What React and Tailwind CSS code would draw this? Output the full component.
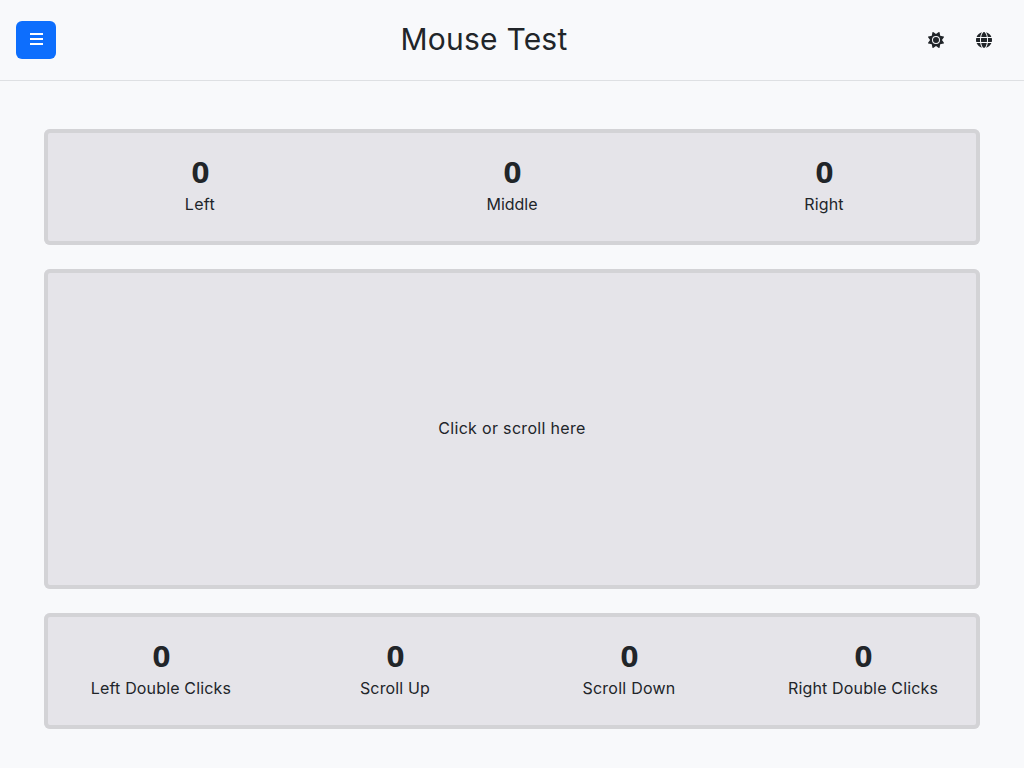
import { useState } from "react";
import { FaGlobe, FaSun } from "react-icons/fa6";

const buttonStats = [
  { id: "left", label: "Left", className: "tracking-[0.02em]" },
  { id: "middle", label: "Middle", className: "tracking-[0]" },
  { id: "right", label: "Right", className: "tracking-[0.01em]" },
];

const extraStats = [
  { id: "leftDouble", label: "Left Double Clicks", className: "tracking-[0.01em]" },
  { id: "scrollUp", label: "Scroll Up", className: "tracking-[0.01em]" },
  { id: "scrollDown", label: "Scroll Down", className: "tracking-[0.015em]" },
  { id: "rightDouble", label: "Right Double Clicks", className: "tracking-[0.01em]" },
];

const buttonNames = ["left", "middle", "right"];

function Panel({ className, children, ...props }) {
  return (
    <div
      className={`rounded-md bg-[#e5e4e9] inset-ring-4 inset-ring-[#d3d3d6] ${className}`}
      {...props}
    >
      {children}
    </div>
  );
}

function Stat({ value, label, className }) {
  return (
    <div className="flex flex-col items-center pt-[23px]">
      <div className="scale-x-108 pl-px text-[29px] leading-10 font-bold font-['Noto_Sans',sans-serif]">
        {value}
      </div>
      <div className={`leading-6 whitespace-nowrap ${className}`}>{label}</div>
    </div>
  );
}

function MenuIcon() {
  return (
    <svg viewBox="0 0 14 14" className="mb-0.5 size-3.5" fill="currentColor">
      <path d="M1 1h13v2H1zM1 6h13v2H1zM1 11h13v2H1z" />
    </svg>
  );
}

function Header() {
  return (
    <header className="flex h-[81px] items-center justify-between border-b border-[#dee0e3] px-4">
      <button
        aria-label="Menu"
        className="flex h-[38px] w-10 items-center justify-center rounded-md bg-[#0d6efd] text-white"
      >
        <MenuIcon />
      </button>
      <h1 className="pb-0.5 text-[30px] leading-9 tracking-[0.007em]">Mouse Test</h1>
      <div className="flex">
        <button aria-label="Theme" className="flex h-10 w-12 items-center justify-center">
          <FaSun className="size-4" />
        </button>
        <button aria-label="Language" className="flex h-10 w-12 items-center justify-center">
          <FaGlobe className="size-4" />
        </button>
      </div>
    </header>
  );
}

function App() {
  const [counts, setCounts] = useState({});

  function add(name) {
    setCounts((c) => ({ ...c, [name]: (c[name] || 0) + 1 }));
  }

  function onMouseDown(e) {
    const name = buttonNames[e.button];
    if (!name) return;
    add(name);
    if (e.detail === 2 && name !== "middle") add(`${name}Double`);
  }

  return (
    <div className="min-h-screen bg-[#f8f9fb] text-[#212529] font-[Inter,sans-serif]">
      <Header />
      <main className="flex flex-col gap-6 px-11 pt-12">
        <Panel className="grid h-29 grid-cols-3">
          {buttonStats.map((stat) => (
            <Stat key={stat.id} {...stat} value={counts[stat.id] || 0} />
          ))}
        </Panel>
        <Panel
          className="flex h-80 items-center justify-center select-none"
          onMouseDown={onMouseDown}
          onContextMenu={(e) => e.preventDefault()}
          onWheel={(e) => add(e.deltaY < 0 ? "scrollUp" : "scrollDown")}
        >
          <span className="pb-0.5 tracking-[0.02em]">Click or scroll here</span>
        </Panel>
        <Panel className="grid h-29 grid-cols-4">
          {extraStats.map((stat) => (
            <Stat key={stat.id} {...stat} value={counts[stat.id] || 0} />
          ))}
        </Panel>
      </main>
    </div>
  );
}

export default App;
